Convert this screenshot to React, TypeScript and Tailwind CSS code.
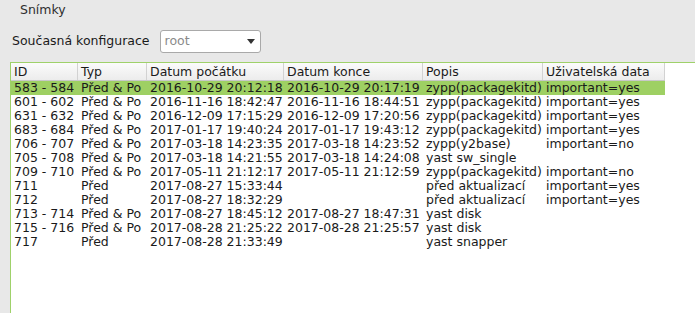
import React from "react";

const cols = [67, 69, 137, 139, 120, 122];
const headers = ["ID", "Typ", "Datum počátku", "Datum konce", "Popis", "Uživatelská data"];
const rows: string[][] = [
  ["583 - 584", "Před & Po", "2016-10-29 20:12:18", "2016-10-29 20:17:19", "zypp(packagekitd)", "important=yes"],
  ["601 - 602", "Před & Po", "2016-11-16 18:42:47", "2016-11-16 18:44:51", "zypp(packagekitd)", "important=yes"],
  ["631 - 632", "Před & Po", "2016-12-09 17:15:29", "2016-12-09 17:20:56", "zypp(packagekitd)", "important=yes"],
  ["683 - 684", "Před & Po", "2017-01-17 19:40:24", "2017-01-17 19:43:12", "zypp(packagekitd)", "important=yes"],
  ["706 - 707", "Před & Po", "2017-03-18 14:23:35", "2017-03-18 14:23:52", "zypp(y2base)", "important=no"],
  ["705 - 708", "Před & Po", "2017-03-18 14:21:55", "2017-03-18 14:24:08", "yast sw_single", ""],
  ["709 - 710", "Před & Po", "2017-05-11 21:12:17", "2017-05-11 21:12:59", "zypp(packagekitd)", "important=no"],
  ["711", "Před", "2017-08-27 15:33:44", "", "před aktualizací", "important=yes"],
  ["712", "Před", "2017-08-27 18:32:29", "", "před aktualizací", "important=yes"],
  ["713 - 714", "Před & Po", "2017-08-27 18:45:12", "2017-08-27 18:47:31", "yast disk", ""],
  ["715 - 716", "Před & Po", "2017-08-28 21:25:22", "2017-08-28 21:25:57", "yast disk", ""],
  ["717", "Před", "2017-08-28 21:33:49", "", "yast snapper", ""],
];

export default function App() {
  return (
    <div className="w-[695px] h-[313px] bg-[#e8e8e8] overflow-hidden flex flex-col font-['DejaVu_Sans',sans-serif] text-[12.5px] text-[#1a1a1a]">
      <div className="h-[22px] pl-[20px] pt-[3px] leading-[14px] text-[#2e2e2e]">Snímky</div>
      <div className="flex items-center h-[24px] mt-[7px] pl-[12px] leading-[14px]">
        <span>Současná konfigurace</span>
        <div className="ml-[10px] w-[101px] h-[23px] bg-white border border-[#a9a9a9] rounded-[3px] flex items-center justify-between pl-[4px] pr-[5px]">
          <span className="text-[#8a8a8a]">root</span>
          <svg width="8" height="5" viewBox="0 0 8 5"><path d="M0 0 L8 0 L4 5 Z" fill="#333" /></svg>
        </div>
      </div>
      <div className="mt-[9px] ml-[10px] flex-1 bg-white border-l border-t border-[#9fd16a]">
        <div className="flex h-[18px] bg-gradient-to-b from-[#fbfbfb] to-[#ececec] border-b border-[#c8c8c8] w-[654px]">
          {headers.map((h, i) => (
            <div
              key={i}
              style={{ width: cols[i] }}
              className="shrink-0 pl-[3px] leading-[17px] border-r border-[#d2d2d2] whitespace-nowrap overflow-hidden"
            >
              {h}
            </div>
          ))}
        </div>
        {rows.map((r, ri) => (
          <div key={ri} className={`flex h-[14px] w-[654px] ${ri === 0 ? "bg-[#9ed063]" : ""}`}>
            {r.map((c, ci) => (
              <div
                key={ci}
                style={{ width: cols[ci] }}
                className="shrink-0 pl-[3px] leading-[14px] whitespace-nowrap overflow-hidden"
              >
                {c}
              </div>
            ))}
          </div>
        ))}
      </div>
    </div>
  );
}
